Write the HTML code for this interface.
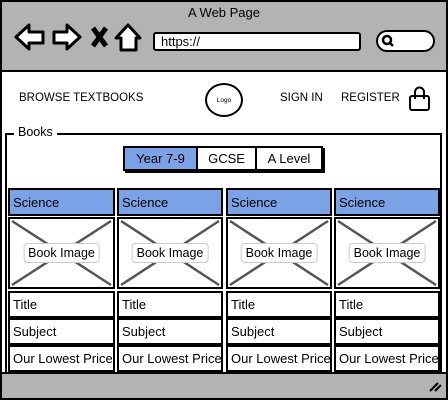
<!DOCTYPE html>
<html><head><style>
*{box-sizing:border-box;margin:0;padding:0}
body{width:448px;height:400px;position:relative;overflow:hidden;background:#fff;font-family:"Liberation Sans",sans-serif;color:#000}
.a{position:absolute}
.cell{position:absolute;border:2px solid #000;background:#fff;font-size:13px;padding-left:3px;display:flex;align-items:center;white-space:nowrap;overflow:hidden}
</style></head><body>
<div class="a" style="left:0;top:0;width:448px;height:400px;border:2px solid #000"></div>
<div class="a" style="left:2px;top:2px;width:444px;height:70px;background:#b3b3b3;border-bottom:2px solid #000"></div>
<div class="a" style="left:0;top:5px;width:448px;text-align:center;font-size:13px">A Web Page</div>
<svg class="a" style="left:12px;top:21px" width="135" height="32" viewBox="0 0 135 32" fill="#fff" stroke="#000" stroke-width="3" stroke-linejoin="round">
<path d="M4 16 L17 4 L17 11 L31 11 L31 22 L17 22 L17 28 Z"/>
<path d="M68 16 L55 4 L55 11 L42 11 L42 22 L55 22 L55 28 Z"/>
<path d="M81 7 L94 25 M94 7 L81 25" stroke-width="5"/>
<path d="M104 17 L116 4 L128 17 L124 17 L124 29 L109 29 L109 17 Z"/>
</svg>
<div class="a" style="left:153px;top:32px;width:208px;height:19px;background:#fff;border:2px solid #000;border-radius:3px;font-size:13px;padding-left:6px;line-height:15px">https://</div>
<div class="a" style="left:376px;top:30px;width:59px;height:22px;background:#fff;border:2.5px solid #000;border-radius:11px"></div>
<svg class="a" style="left:381px;top:34px" width="14" height="14"><circle cx="6" cy="6" r="4" fill="none" stroke="#000" stroke-width="2.5"/><path d="M9 9 L12 12" stroke="#000" stroke-width="2.5"/></svg>
<div class="a" style="left:19px;top:92px;font-size:11.5px">BROWSE TEXTBOOKS</div>
<div class="a" style="left:205px;top:83px;width:38px;height:34px;border:2px solid #000;border-radius:50%;font-size:6.5px;display:flex;align-items:center;justify-content:center">Logo</div>
<div class="a" style="left:280px;top:92px;font-size:11.5px">SIGN IN</div>
<div class="a" style="left:341px;top:92px;font-size:11.5px">REGISTER</div>
<svg class="a" style="left:408px;top:86px" width="24" height="26" fill="none" stroke="#000" stroke-width="2"><rect x="2" y="10" width="19" height="14" rx="2"/><path d="M7 13 V6 a4.5 4.5 0 0 1 9 0 V13"/></svg>
<div class="a" style="left:5px;top:133px;width:437px;height:245px;border:2px solid #000;border-bottom:none"></div>
<div class="a" style="left:14px;top:125px;background:#fff;padding:0 4px;font-size:12.5px">Books</div>
<div class="a" style="left:123px;top:146px;width:200px;height:25px;border:2px solid #000;box-shadow:2px 2px 0 #000"></div>
<div class="cell" style="left:123px;top:146px;width:75px;height:25px;background:#7ba2e6;justify-content:center;padding:0">Year 7-9</div>
<div class="cell" style="left:196px;top:146px;width:61px;height:25px;justify-content:center;padding:0">GCSE</div>
<div class="cell" style="left:255px;top:146px;width:68px;height:25px;justify-content:center;padding:0">A Level</div>
<div id="cols"></div>
<div class="a" style="left:2px;top:372px;width:444px;height:26px;background:#b3b3b3;border-top:2px solid #000"></div>
<svg class="a" style="left:428px;top:380px" width="14" height="12" stroke="#000" stroke-width="2"><path d="M2 11 L10 3 M7 11 L13 5"/></svg>
<script>
var xs=[8,117,226,334],w=[107,106,106,106],h='';
xs.forEach(function(x,i){var W=w[i];
h+='<div class="cell" style="left:'+x+'px;top:188px;width:'+W+'px;height:28px;background:#7ba2e6">Science</div>';
h+='<div class="a" style="left:'+x+'px;top:217px;width:'+W+'px;height:72px;border:2px solid #000;background:#fff"><svg width="'+(W-4)+'" height="68" style="position:absolute;left:0;top:0"><path d="M2 2 L'+(W-6)+' 66 M'+(W-6)+' 2 L2 66" stroke="#555" stroke-width="2.5"/></svg><div style="position:absolute;left:50%;top:50%;transform:translate(-50%,-50%);background:#fff;border:1px solid #ccc;border-radius:4px;padding:2px 4px;font-size:12.5px;white-space:nowrap">Book Image</div></div>';
['Title','Subject','Our Lowest Price'].forEach(function(t,j){h+='<div class="cell" style="left:'+x+'px;top:'+(291+j*27)+'px;width:'+W+'px;height:27px">'+t+'</div>';});
});
document.getElementById('cols').innerHTML=h;
</script>
</body></html>
